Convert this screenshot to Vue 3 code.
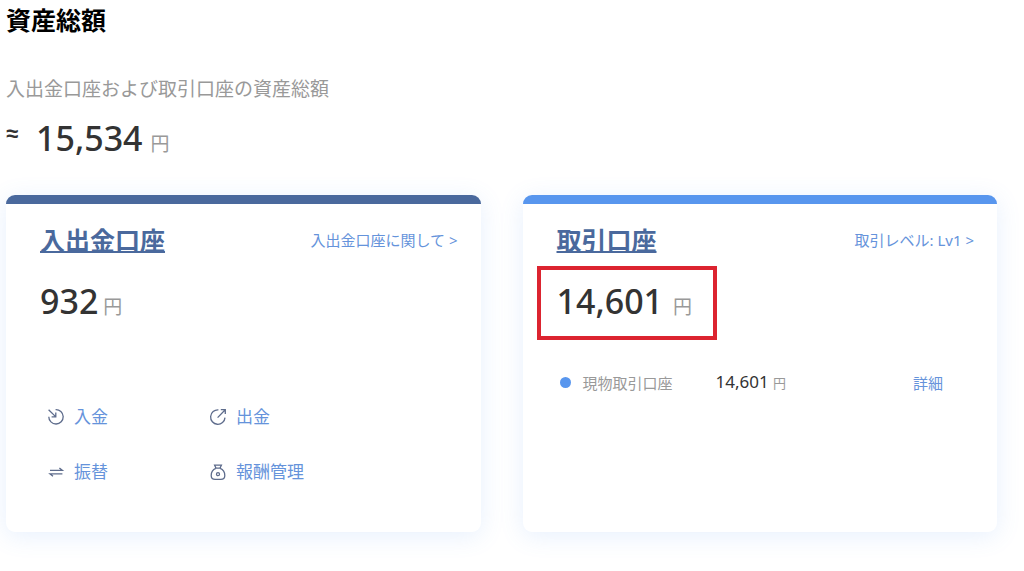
<script setup>
const mainActions = [
  { icon: 'deposit', label: '入金' },
  { icon: 'withdraw', label: '出金' },
  { icon: 'transfer', label: '振替' },
  { icon: 'reward', label: '報酬管理' },
]
</script>

<template>
  <main class="page">
    <h1 class="page-title">資産総額</h1>
    <p class="subtitle">入出金口座および取引口座の資産総額</p>
    <p class="total">
      <span class="approx">≈</span>
      <span class="amount">15,534</span>
      <span class="unit">円</span>
    </p>

    <div class="cards">
      <section class="card card-main">
        <header class="card-head">
          <h2><a class="card-title" href="#">入出金口座</a></h2>
          <a class="link" href="#">入出金口座に関して &gt;</a>
        </header>
        <p class="balance">
          <span class="amount">932</span>
          <span class="unit">円</span>
        </p>
        <nav class="actions">
          <a v-for="a in mainActions" :key="a.icon" class="action" href="#">
            <svg class="icon" viewBox="0 0 18 18" aria-hidden="true">
              <template v-if="a.icon === 'deposit'">
                <path d="M8.6 1.6A7.2 7.2 0 1 1 1.8 8.7" />
                <path d="M1.6 1.8l7 6.8M8.8 4.6v4.2H4.6" />
              </template>
              <template v-else-if="a.icon === 'withdraw'">
                <path d="M9.4 1.9A7.2 7.2 0 1 0 16 9.6" />
                <path d="M8.6 9.6l7.4-7.6M11.8 1.7h4.5v4.4" />
              </template>
              <template v-else-if="a.icon === 'transfer'">
                <path d="M3 7.4h12.4l-3-2.4M15.4 10.8H3l3 2.4" />
              </template>
              <template v-else>
                <path d="M5.6 2.2h6.8l-1.4 2.9H7zM6 5.1h6" />
                <path d="M6.8 5.3C3.8 6.6 2.2 9.5 2.2 12.4c0 2.7 1.5 3.9 4 3.9h5.6c2.5 0 4-1.2 4-3.9 0-2.9-1.6-5.8-4.6-7.1" />
                <circle cx="9" cy="11.2" r="1.5" />
              </template>
            </svg>
            <span>{{ a.label }}</span>
          </a>
        </nav>
      </section>

      <section class="card card-trade">
        <header class="card-head">
          <h2><a class="card-title" href="#">取引口座</a></h2>
          <a class="link" href="#">取引レベル: Lv1 &gt;</a>
        </header>
        <p class="balance highlighted">
          <span class="amount">14,601</span>
          <span class="unit">円</span>
        </p>
        <div class="row">
          <span class="dot"></span>
          <span class="row-name">現物取引口座</span>
          <span class="row-amount">14,601 <small>円</small></span>
          <a class="link row-link" href="#">詳細</a>
        </div>
      </section>
    </div>
  </main>
</template>

<style>
body {
  margin: 0;
  background: #fff;
}
</style>

<style scoped>
.page {
  padding: 0 27px 39px 6px;
  color: #333;
  font-family: "Noto Sans", "Noto Sans CJK JP", sans-serif;
}
h1, h2, p {
  margin: 0;
}
a {
  text-decoration: none;
}
.page-title {
  color: #000;
  font-size: 25px;
  line-height: 40px;
  font-weight: 700;
}
.subtitle {
  margin-top: 34px;
  color: #999;
  font-size: 19px;
  line-height: 30px;
}
.total,
.balance {
  display: flex;
  align-items: baseline;
  line-height: 48px;
}
.total {
  margin-top: 10px;
}
.approx {
  align-self: flex-start;
  width: 30px;
  font-family: "Liberation Sans", sans-serif;
  font-size: 22px;
  font-weight: 700;
  line-height: 40px;
}
.amount {
  font-size: 34px;
  font-weight: 500;
}
.unit {
  margin-left: 8px;
  color: #999;
  font-size: 19px;
}
.cards {
  display: grid;
  grid-template-columns: 1fr 1fr;
  gap: 42px;
  margin-top: 27px;
}
.card {
  box-sizing: border-box;
  min-height: 337px;
  padding: 17px 23px 40px 34px;
  border-top: 9px solid #4a699d;
  border-radius: 9px;
  background: #fff;
  box-shadow: 0 4px 24px rgba(88, 150, 238, 0.14);
}
.card-trade {
  border-top-color: #5896ee;
}
.card-head {
  display: flex;
  align-items: center;
  justify-content: space-between;
}
.card-head h2 {
  font-size: 25px;
  line-height: 38px;
}
.card-title {
  color: #4a699d;
  font-weight: 700;
  text-decoration: underline;
  text-decoration-thickness: 2px;
  text-underline-offset: 1px;
  text-decoration-skip-ink: none;
}
.link {
  color: #6593db;
  font-size: 15px;
  line-height: 24px;
}
.balance {
  margin-top: 18px;
}
.balance .unit {
  margin-left: 5px;
}
.highlighted {
  position: relative;
}
.highlighted .unit {
  margin-left: 10px;
}
.highlighted::after {
  content: "";
  position: absolute;
  top: -11px;
  left: -20px;
  box-sizing: border-box;
  width: 180px;
  height: 74px;
  border: 4px solid #dc2430;
  pointer-events: none;
}
.actions {
  display: grid;
  grid-template-columns: 162px 1fr;
  row-gap: 29px;
  margin: 73px 0 0 7px;
}
.action {
  display: flex;
  align-items: center;
  gap: 9px;
  color: #6593db;
  font-size: 17px;
  line-height: 26px;
}
.icon {
  width: 18px;
  height: 18px;
  fill: none;
  stroke: #5e6c8c;
  stroke-width: 1.3;
}
.row {
  display: flex;
  align-items: center;
  margin: 38px 31px 0 3px;
  line-height: 26px;
}
.dot {
  width: 11px;
  height: 11px;
  border-radius: 50%;
  background: #5896ee;
}
.row-name {
  width: 133px;
  margin-left: 12px;
  color: #999;
  font-size: 15px;
}
.row-amount {
  font-size: 17px;
}
.row-amount small {
  color: #999;
  font-size: 13px;
}
.row-link {
  margin-left: auto;
}
</style>
